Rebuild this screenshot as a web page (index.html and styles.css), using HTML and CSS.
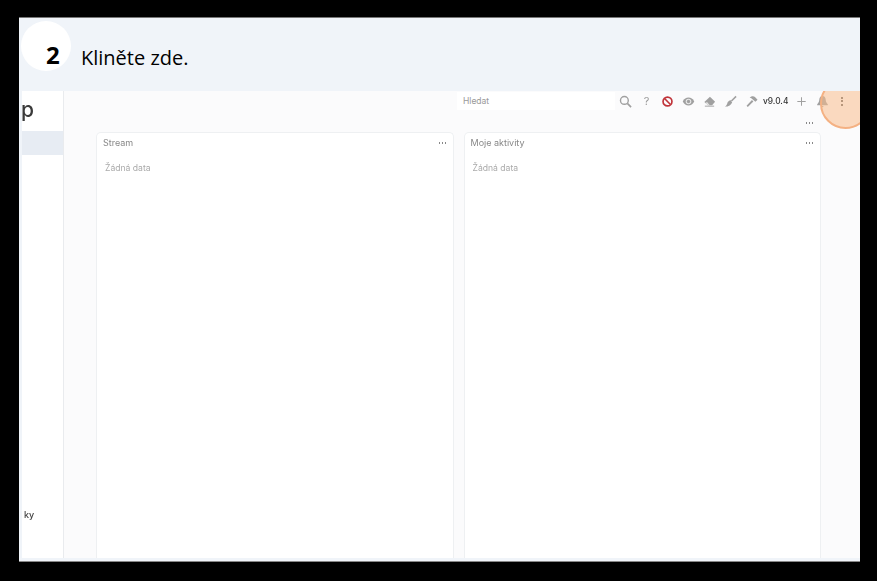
FILE: index.html
```html
<!DOCTYPE html>
<html>

<head>
  <meta charset="UTF-8">
  <title>Kliněte zde</title>
  <link rel="stylesheet" href="styles.css">
</head>

<body>
<div class="frame">
  <div class="tip">
    <span class="step">2</span>
    <span class="tip-text">Kliněte zde.</span>
  </div>
  <div class="app">
    <div class="sidebar">
      <div class="logo">p</div>
      <div class="active-item"></div>
      <div class="side-foot">ky</div>
    </div>
    <div class="main">
      <div class="toolbar">
        <div class="search">Hledat</div>
        <svg class="icon" viewBox="0 0 14 14"><circle cx="5.800" cy="5.800" r="4.200" fill="none" stroke="#a0a0a0" stroke-width="1.500"/><path d="M9 9l4 4" stroke="#a0a0a0" stroke-width="1.800" fill="none"/></svg>
        <span class="help">?</span>
        <svg class="icon" viewBox="0 0 14 14"><circle cx="7" cy="7" r="4.800" fill="none" stroke="#c0343a" stroke-width="1.800"/><path d="M3.800 3.800l6.400 6.400" stroke="#c0343a" stroke-width="1.800"/></svg>
        <svg class="icon" viewBox="0 0 14 14"><path d="M0.800 7C2.300 4 4.400 2.800 7 2.800s4.700 1.200 6.200 4.200c-1.500 3-3.600 4.200-6.200 4.200S2.300 10 0.800 7z" fill="#a0a0a0"/><circle cx="7" cy="7" r="3" fill="#e8e8e8"/><circle cx="7" cy="7" r="1.800" fill="#a0a0a0"/></svg>
        <svg class="icon" viewBox="0 0 14 14"><path d="M7.500 2L13 7.200 9.800 11H5.500L1.500 7.500z" fill="#a0a0a0"/><path d="M4.300 7.500l3 3.500H5.500L2.800 8.500z" fill="#e4e4e4"/><path d="M2 12h10" stroke="#a0a0a0"/></svg>
        <svg class="icon" viewBox="0 0 14 14"><path d="M13 1.500L8 6.500" stroke="#a0a0a0" stroke-width="1.600"/><path d="M6.800 5.500l2 2.200C8 10.500 5 12.500 1 12.500c2-1.200 2.500-3 3-5 .8-.4 1.800-1.200 2.800-2z" fill="#a0a0a0"/></svg>
        <svg class="icon" viewBox="0 0 14 14"><path d="M7.500 5.500l-5.800 6 1.300 1.300 6-5.800z" fill="#a0a0a0"/><path d="M5 2.800C7.500.8 9.500 1 11 2.500l2.500 2.500-2.300 2.300L6.800 3.500z" fill="#a0a0a0"/></svg>
        <span class="version">v9.0.4</span>
        <svg class="icon" viewBox="0 0 14 14"><path d="M7 2.500v9M2.500 7h9" stroke="#a0a0a0" stroke-width="1.100"/></svg>
        <svg class="icon" viewBox="0 0 14 14"><path d="M7 1c2.600 0 3.300 2 3.500 4.500.1 1.800.9 3.200 2.200 4.500v1H1.300v-1c1.300-1.300 2.100-2.700 2.200-4.500C3.700 3 4.400 1 7 1zM5.500 11.800h3L7 13.300z" fill="#a0a0a0"/></svg>
        <span class="kebab"><i></i><i></i><i></i></span>
      </div>
      <div class="more-row"><span class="dots"></span></div>
      <div class="cards">
        <div class="card">
          <div class="card-head">Stream<span class="dots"></span></div>
          <div class="empty">Žádná data</div>
        </div>
        <div class="card">
          <div class="card-head">Moje aktivity<span class="dots"></span></div>
          <div class="empty">Žádná data</div>
        </div>
      </div>
      <div class="spot"></div>
    </div>
  </div>
</div>
</body>

</html>
```

FILE: styles.css
```css
html, body {
  margin: 0;
  height: 100%;
  background: #000;
  overflow: hidden;
}

.frame {
  position: relative;
  box-sizing: border-box;
  width: 841px;
  height: 545px;
  margin: 17px 0 0 19px;
  background: #f0f4f9;
  border-top: 1px solid #777;
  border-bottom: 1px solid #888;
  overflow: hidden;
}

.tip {
  display: flex;
  align-items: center;
  height: 73px;
  padding: 4px 0 0 27px;
  box-sizing: border-box;
  font-family: "Open Sans", sans-serif;
  color: #000;
}
.tip::before {
  content: "";
  position: absolute;
  left: 2px;
  top: 3px;
  width: 50px;
  height: 50px;
  border-radius: 50%;
  background: #fff;
}
.step {
  position: relative;
  width: 35px;
  margin-bottom: 4px;
  font-size: 24px;
  font-weight: 700;
}
.tip-text {
  position: relative;
  margin-top: 2px;
  font-size: 20px;
}

.app {
  display: flex;
  height: 467px;
  margin-left: 3px;
  filter: blur(0.55px);
  font-family: Inter, sans-serif;
}

.sidebar {
  display: flex;
  flex-direction: column;
  width: 41px;
  background: #fff;
  border-right: 1px solid #e9ebee;
}
.logo {
  height: 40px;
  margin-left: -1px;
  font-size: 21px;
  font-weight: 500;
  line-height: 38px;
  color: #3a3a3a;
}
.active-item {
  height: 24px;
  background: #e7ecf3;
}
.side-foot {
  margin: auto 0 38px 2px;
  font-size: 9px;
  font-weight: 500;
  color: #444;
}

.main {
  position: relative;
  flex: 1;
  background: #fbfbfc;
  overflow: hidden;
}

.toolbar {
  display: flex;
  align-items: center;
  height: 18px;
  margin-top: 1px;
  padding-left: 393px;
  font-size: 8.500px;
  color: #999;
}
.search {
  box-sizing: border-box;
  width: 158px;
  height: 18px;
  padding-left: 6px;
  margin-right: 4px;
  line-height: 18px;
  background: #fff;
}
.icon {
  flex: none;
  width: 13px;
  height: 13px;
  margin-right: 8px;
}
.help {
  width: 13px;
  margin-right: 8px;
  text-align: center;
  font-size: 11px;
}
.version {
  flex: none;
  width: 25px;
  margin: 0 6.500px 0 -3px;
  font-size: 8.400px;
  font-weight: 500;
  color: #333;
}
.kebab {
  display: flex;
  flex-direction: column;
  gap: 1.500px;
  margin-left: 4.500px;
}
.kebab i {
  width: 2px;
  height: 2px;
  border-radius: 50%;
  background: #333;
}

.dots {
  display: block;
  width: 9px;
  height: 2px;
  background: radial-gradient(circle, #888 1px, transparent 1px) 0 0 / 3px 2px;
}
.more-row {
  display: flex;
  justify-content: flex-end;
  height: 22px;
  padding: 12px 46px 0 0;
  box-sizing: border-box;
}

.cards {
  display: flex;
  gap: 10px;
  height: 426px;
  padding: 0 39px 0 32px;
}
.card {
  flex: 1;
  background: #fff;
  border: 1px solid #eef0f2;
  border-bottom: 0;
  border-radius: 5px 5px 0 0;
  font-size: 9px;
}
.card-head {
  display: flex;
  justify-content: space-between;
  align-items: center;
  height: 19px;
  padding: 0 6px;
  color: #888;
}
.empty {
  margin: 11px 0 0 8px;
  font-size: 8.600px;
  color: #aaa;
}

.spot {
  position: absolute;
  left: 756px;
  top: -13px;
  width: 47px;
  height: 47px;
  border-radius: 50%;
  background: rgba(250, 190, 140, 0.55);
  border: 2px solid #f4b183;
}
```
